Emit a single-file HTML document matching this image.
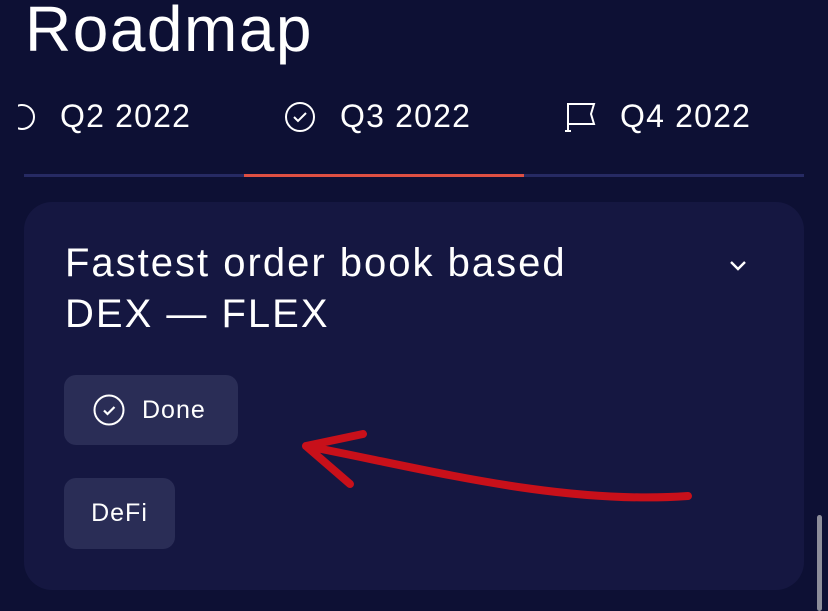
<!DOCTYPE html>
<html><head><meta charset="utf-8"><style>
*{margin:0;padding:0;box-sizing:border-box}
body{width:828px;height:611px;overflow:hidden;background:#0d1034;font-family:"Liberation Sans",sans-serif;color:#fff;position:relative}
.abs{position:absolute}
h1{position:absolute;left:25px;top:-9px;font-size:64px;font-weight:400;letter-spacing:1.5px;line-height:76px}
.tab{position:absolute;top:97px;font-size:32px;line-height:38px;white-space:nowrap;letter-spacing:1.2px}
.line{position:absolute;top:174px;height:3px;background:#262a63}
.card{position:absolute;left:24px;top:202px;width:780px;height:388px;border-radius:28px;background:#151741}
.title{position:absolute;left:65px;top:238px;font-size:40px;line-height:51px;letter-spacing:2px}
.chip{position:absolute;background:#2a2d56;border-radius:12px;font-size:25px;letter-spacing:1px;display:flex;align-items:center}
</style></head><body>
<h1>Roadmap</h1>
<svg class="abs" style="left:18px;top:103px" width="22" height="28" viewBox="0 0 22 28"><circle cx="4" cy="14" r="12" fill="none" stroke="#fff" stroke-width="2"/></svg>
<div class="tab" style="left:60px">Q2 2022</div>
<svg class="abs" style="left:284px;top:101px" width="32" height="32" viewBox="0 0 32 32"><circle cx="16" cy="16" r="14" fill="none" stroke="#fff" stroke-width="2"/><path d="M10 16l4 4 8-8" fill="none" stroke="#fff" stroke-width="2"/></svg>
<div class="tab" style="left:340px">Q3 2022</div>
<svg class="abs" style="left:563px;top:100px" width="34" height="34" viewBox="0 0 34 34"><path d="M5 3v28M2 31h6M5 4h26l-3 10 3 10H5" fill="none" stroke="#fff" stroke-width="2"/></svg>
<div class="tab" style="left:620px">Q4 2022</div>
<div class="line" style="left:24px;width:780px"></div>
<div class="line" style="left:244px;width:280px;background:#de4f43"></div>
<div class="card"></div>
<div class="title">Fastest order book based<br>DEX — FLEX</div>
<svg class="abs" style="left:727px;top:257px" width="22" height="16" viewBox="0 0 22 16"><path d="M4 5l7 7 7-7" fill="none" stroke="#fff" stroke-width="2.4"/></svg>
<div class="chip" style="left:64px;top:375px;width:174px;height:70px"><svg style="margin-left:29px" width="32" height="32" viewBox="0 0 32 32"><circle cx="16" cy="16" r="14.5" fill="none" stroke="#fff" stroke-width="2"/><path d="M11 16.5l3.5 3.5 7-7" fill="none" stroke="#fff" stroke-width="2.2"/></svg><span style="margin-left:17px">Done</span></div>
<div class="chip" style="left:64px;top:478px;width:111px;height:71px;justify-content:center">DeFi</div>
<svg class="abs" style="left:0;top:0" width="828" height="611"><path d="M688 496C560 505 430 470 306 446M306 446L363 434M306 446L350 484" fill="none" stroke="#c8101a" stroke-width="8" stroke-linecap="round"/></svg>
<div class="abs" style="left:817px;top:515px;width:5px;height:96px;background:#8c8d9a;border-radius:3px"></div>
</body></html>
